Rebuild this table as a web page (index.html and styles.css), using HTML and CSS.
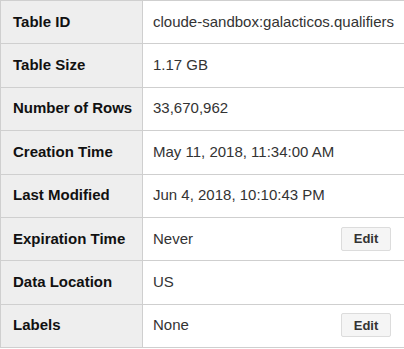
FILE: index.html
```html
<!DOCTYPE html>
<html lang="en">

<head>
    <meta charset="UTF-8">
    <title>Table Details</title>
    <link rel="stylesheet" href="styles.css">
</head>

<body>
    <table class="details">
        <tr>
            <th>Table ID</th>
            <td>cloude-sandbox:galacticos.qualifiers</td>
        </tr>
        <tr>
            <th>Table Size</th>
            <td>1.17 GB</td>
        </tr>
        <tr>
            <th>Number of Rows</th>
            <td>33,670,962</td>
        </tr>
        <tr>
            <th>Creation Time</th>
            <td>May 11, 2018, 11:34:00 AM</td>
        </tr>
        <tr>
            <th>Last Modified</th>
            <td>Jun 4, 2018, 10:10:43 PM</td>
        </tr>
        <tr>
            <th>Expiration Time</th>
            <td>
                <div class="value-row">
                    <span>Never</span>
                    <button class="edit-btn">Edit</button>
                </div>
            </td>
        </tr>
        <tr>
            <th>Data Location</th>
            <td>US</td>
        </tr>
        <tr>
            <th>Labels</th>
            <td>
                <div class="value-row">
                    <span>None</span>
                    <button class="edit-btn">Edit</button>
                </div>
            </td>
        </tr>
    </table>
</body>

</html>
```

FILE: styles.css
```css
body {
    font-family: "Liberation Sans", Arial, sans-serif;
    margin: 0;
    padding: 0;
    background: #fff;
}

.details {
    width: 100%;
    border-collapse: collapse;
    table-layout: fixed;
    font-size: 15px;
}

.details th,
.details td {
    height: 40.4px;
    padding: 0 0 2px 0;
    border-top: 1px solid #cfcfcf;
    border-bottom: 1px solid #cfcfcf;
    vertical-align: middle;
    white-space: nowrap;
}

.details th {
    width: 129px;
    padding-left: 12px;
    text-align: left;
    font-weight: bold;
    color: #111;
    background-color: #eeeeee;
    border-left: 1px solid #cfcfcf;
    border-right: 1px solid #cfcfcf;
}

.details td {
    padding-left: 10px;
    padding-right: 13px;
    color: #333;
}

.value-row {
    display: flex;
    justify-content: space-between;
    align-items: center;
}

.edit-btn {
    font-family: "Liberation Sans", Arial, sans-serif;
    font-size: 13px;
    font-weight: bold;
    color: #333;
    background-color: #f5f5f5;
    border: 1px solid #dcdcdc;
    border-radius: 2px;
    width: 50px;
    height: 24px;
    margin-top: 1px;
    padding: 0;
    cursor: pointer;
}

.edit-btn:hover {
    background-color: #ececec;
}
```
